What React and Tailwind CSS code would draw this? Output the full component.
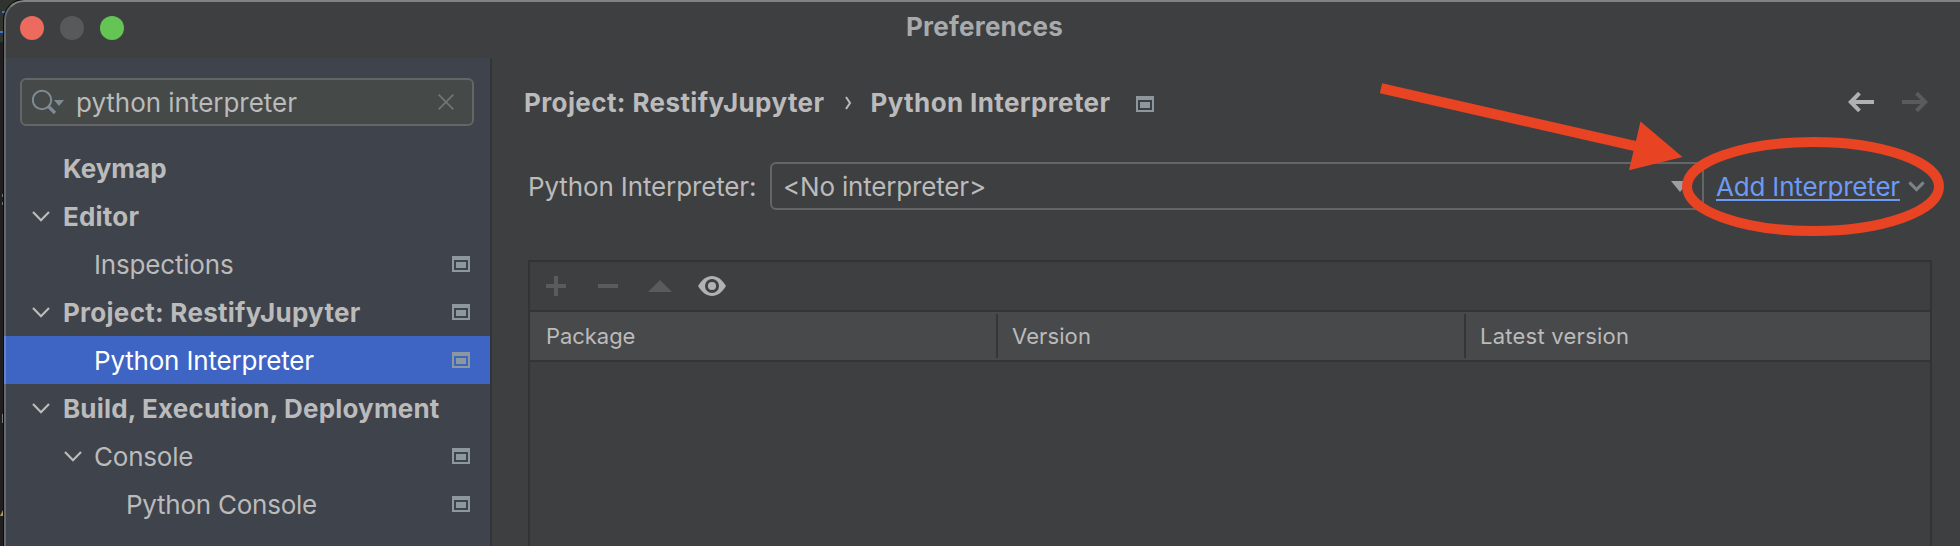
import React from 'react';

function ProjectBadge() {
  return (
    <svg width="18" height="16" viewBox="0 0 18 16" className="shrink-0 text-[#8c979e]" fill="currentColor" shapeRendering="crispEdges">
      <path fillRule="evenodd" d="M0 0H18V16H0ZM2 4V14H16V4Z" />
      <rect x="4" y="6" width="10" height="6" />
    </svg>
  );
}

function Chevron() {
  return (
    <svg width="18" height="11" viewBox="0 0 18 11" className="block" fill="none" stroke="#bbbbbb" strokeWidth="2.2">
      <path d="M1 1L9 9.2L17 1" />
    </svg>
  );
}

const tree = [
  { label: 'Keymap', indent: 'pl-[28px]', bold: true, text: 'tracking-[0px]' },
  { label: 'Editor', indent: 'pl-[28px]', bold: true, open: true, text: 'tracking-[0.2px]' },
  { label: 'Inspections', indent: 'pl-[60px]', badge: true, text: 'tracking-[-0.18px]' },
  { label: 'Project: RestifyJupyter', indent: 'pl-[28px]', bold: true, open: true, badge: true, text: 'tracking-[0.27px]' },
  { label: 'Python Interpreter', indent: 'pl-[60px]', badge: true, selected: true, text: 'tracking-[-0.19px]' },
  { label: 'Build, Execution, Deployment', indent: 'pl-[28px]', bold: true, open: true, text: 'tracking-[0.17px]' },
  { label: 'Console', indent: 'pl-[60px]', open: true, badge: true, text: 'tracking-[-0.22px]' },
  { label: 'Python Console', indent: 'pl-[92px]', badge: true, text: 'tracking-[-0.25px]' },
];

function TreeRow({ label, indent, bold, open, badge, selected, text }) {
  return (
    <div className={`flex h-12 items-center pr-5 ${indent} ${selected ? 'bg-[#3e65c4] text-white' : ''}`}>
      <span className="w-[30px] shrink-0 pt-px">{open && <Chevron />}</span>
      <span className={`grow pt-[2px] ${bold ? 'pl-px font-bold' : ''} ${text}`}>{label}</span>
      {badge && <ProjectBadge />}
    </div>
  );
}

function Sidebar() {
  return (
    <aside className="flex w-[488px] shrink-0 flex-col border-r-2 border-[#333435] bg-[#3f434c]">
      <div className="mt-5 mr-4 ml-4 flex h-12 items-center rounded-md border-2 border-[#646565] bg-[#454948] pr-[18px] pl-[10px]">
        <svg width="34" height="26" viewBox="0 0 34 26" fill="none" className="shrink-0">
          <circle cx="10" cy="11" r="9.2" stroke="#7f8b92" strokeWidth="2" />
          <path d="M16 17L23 24" stroke="#7f8b92" strokeWidth="3.2" />
          <path d="M22 11H32L27 17Z" fill="#7f8b92" />
        </svg>
        <span className="ml-[10px] grow pt-[2px] tracking-[-0.03px]">python interpreter</span>
        <svg width="16" height="16" viewBox="0 0 16 16" stroke="#6f7577" strokeWidth="1.8">
          <path d="M.7 .7L15.3 15.3M15.3 .7L.7 15.3" />
        </svg>
      </div>
      <nav className="mt-[18px]">
        {tree.map((row) => (
          <TreeRow key={row.label} {...row} />
        ))}
      </nav>
    </aside>
  );
}

function Breadcrumb() {
  return (
    <div className="flex h-12 items-center pr-[32px] pl-[32px]">
      <span className="pt-[2px] font-bold tracking-[0.39px]">Project: RestifyJupyter</span>
      <svg width="7" height="14" viewBox="0 0 7 14" fill="none" stroke="#bbbbbb" strokeWidth="2" className="mt-[2px] ml-[21px]">
        <path d="M1 1L5 7L1 13" />
      </svg>
      <span className="ml-[18px] pt-[2px] font-bold tracking-[0.38px]">Python Interpreter</span>
      <span className="mt-[4px] ml-[26px]">
        <ProjectBadge />
      </span>
      <div className="ml-auto flex gap-[28px]">
        <svg width="26" height="20" viewBox="0 0 26 20" fill="none" stroke="#afb1b3" strokeWidth="4">
          <path d="M26 10H3M11.5 1.2L2.8 10L11.5 18.8" />
        </svg>
        <svg width="26" height="20" viewBox="0 0 26 20" fill="none" stroke="#5a5b5c" strokeWidth="4">
          <path d="M0 10H23M14.5 1.2L23.2 10L14.5 18.8" />
        </svg>
      </div>
    </div>
  );
}

function InterpreterRow() {
  return (
    <div className="mt-9 flex h-12 items-center pl-[36px]">
      <span className="w-[242px] pt-[2px] tracking-[-0.13px]">Python Interpreter:</span>
      <div className="flex h-12 w-[934px] items-center rounded-md border-2 border-[#646566] pr-[13px] pl-[11px]">
        <span className="grow pt-[2px] tracking-[-0.18px]">&lt;No interpreter&gt;</span>
        <svg width="18" height="11" viewBox="0 0 18 11" fill="#9d9fa1">
          <path d="M0 0H18L9 11Z" />
        </svg>
      </div>
      <span className="ml-[12px] pt-[2px] tracking-[-0.18px] text-[#6b9bf5] underline decoration-2 underline-offset-[3px] [text-decoration-skip-ink:none]">
        Add Interpreter
      </span>
      <svg width="17" height="11" viewBox="0 0 17 11" fill="none" stroke="#7b8489" strokeWidth="3" className="ml-[8px]">
        <path d="M1.4 1.4L8.5 8.6L15.6 1.4" />
      </svg>
    </div>
  );
}

function PackageTable() {
  return (
    <section className="mt-[50px] ml-9 flex w-[1404px] grow flex-col border-x-2 border-t-2 border-[#323334]">
      <div className="flex h-12 items-center pl-[16px]">
        <svg width="20" height="20" viewBox="0 0 20 20" fill="#5b5b5b">
          <path d="M8 0h4v8h8v4h-8v8H8v-8H0V8h8z" />
        </svg>
        <svg width="20" height="4" viewBox="0 0 20 4" fill="#5b5b5b" className="ml-8">
          <path d="M0 0h20v4H0z" />
        </svg>
        <svg width="24" height="12" viewBox="0 0 24 12" fill="#5b5b5b" className="ml-[30px]">
          <path d="M0 12L12 0L24 12Z" />
        </svg>
        <svg width="28" height="20" viewBox="0 0 28 20" className="ml-[26px]">
          <path d="M0 10C4 3.5 8.500 0 14 0S24 3.500 28 10C24 16.500 19.500 20 14 20S4 16.500 0 10Z" fill="#afb1b3" />
          <circle cx="14" cy="10" r="7" fill="#3e3f41" />
          <circle cx="14" cy="10" r="4.100" fill="#afb1b3" />
        </svg>
      </div>
      <div className="flex h-[52px] items-stretch border-y-2 border-[#343536] bg-[#48494a] py-[2px] text-[22px]">
        <div className="flex w-[468px] items-center border-r-2 border-[#343536] pl-[16px] tracking-[-0.05px]">Package</div>
        <div className="flex w-[468px] items-center border-r-2 border-[#343536] pl-[14px] tracking-[0.1px]">Version</div>
        <div className="flex grow items-center pl-[14px] tracking-[0.25px]">Latest version</div>
      </div>
    </section>
  );
}

function BackdropEdge() {
  return (
    <svg width="24" height="546" viewBox="0 0 24 546" className="absolute top-0 left-0">
      <rect width="24" height="42" fill="#2f352e" />
      <rect y="42" width="24" height="504" fill="#201e1e" />
      <path d="M0 31h3v2H0zM2 11h3v2H2z" fill="#3b76d6" />
      <path d="M2 194h1v3H2zM2 202h1v3H2zM2 414h1v9H2z" fill="#777777" />
      <path d="M0 516L3 510V516Z" fill="#b39a5c" />
    </svg>
  );
}

function Callout() {
  return (
    <svg width="1960" height="546" viewBox="0 0 1960 546" className="pointer-events-none absolute top-0 left-0">
      <path d="M1381 88.200L1636 146.200" stroke="#e84323" strokeWidth="10.200" />
      <path d="M1640.500 121.500L1682.500 157L1629 170.300Z" fill="#e84323" />
      <ellipse cx="1813" cy="186.500" rx="126" ry="44.500" fill="none" stroke="#e84323" strokeWidth="10" />
    </svg>
  );
}

export default function App() {
  return (
    <div className="relative h-[546px] w-[1960px] overflow-hidden bg-[#201e1e] pl-1 font-['Inter',sans-serif] text-[26px] leading-[32px] whitespace-nowrap text-[#bbbbbb]">
      <BackdropEdge />
      <div className="relative flex h-full w-full flex-col overflow-hidden rounded-tl-[20px] bg-[#3e3f41] shadow-[0_0_0_1px_#0c0c0c]">
        <header className="flex h-[58px] shrink-0 items-center pb-[2px] pl-4">
          <div className="flex gap-4">
            <span className="size-6 rounded-full bg-[#ec6a5e]" />
            <span className="size-6 rounded-full bg-[#58595b]" />
            <span className="size-6 rounded-full bg-[#65c554]" />
          </div>
          <h1 className="-mt-[2px] ml-[782px] font-bold tracking-[0.23px] text-[#a9aaab]">Preferences</h1>
        </header>
        <div className="flex min-h-0 grow">
          <Sidebar />
          <main className="flex grow flex-col pt-5">
            <Breadcrumb />
            <InterpreterRow />
            <PackageTable />
          </main>
        </div>
        <div className="pointer-events-none absolute inset-0 rounded-tl-[20px] border-t-2 border-l-2 border-t-white/35 border-l-white/20" />
      </div>
      <Callout />
    </div>
  );
}
